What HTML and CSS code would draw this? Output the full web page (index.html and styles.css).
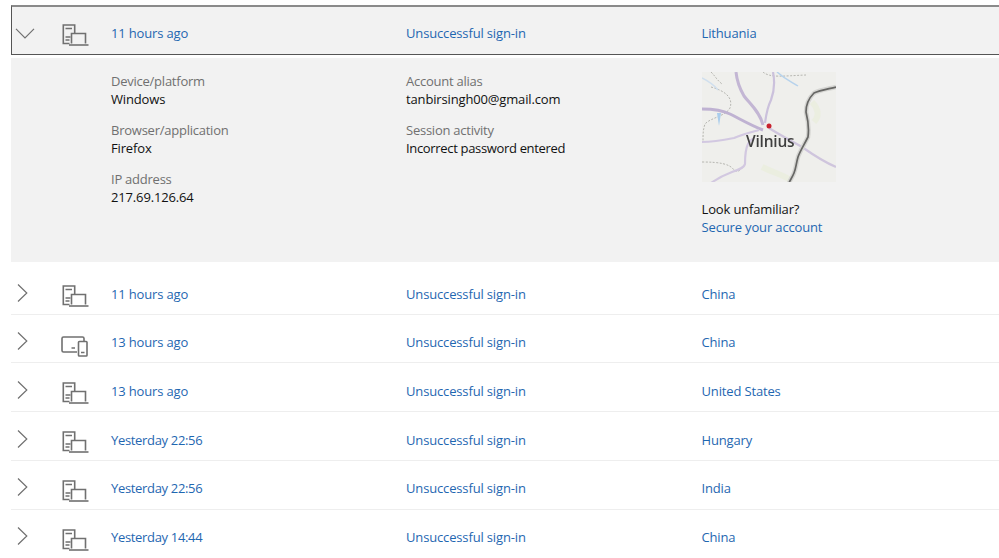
FILE: index.html
```html
<!DOCTYPE html>
<html lang="en">
<head>
<meta charset="utf-8">
<title>Recent activity</title>
<link rel="stylesheet" href="styles.css">
</head>
<body>
<svg class="defs" width="0" height="0" aria-hidden="true">
  <defs>
    <symbol id="pc" viewBox="0 0 27 23">
      <g fill="none" stroke="#707070" stroke-width="1.600">
        <path d="M7.500 19.500H1.300V1H12.700V9"/>
        <path d="M3.500 4.500h6.500M3.500 13h5M3.500 16h4"/>
        <path d="M9.500 19.500V9.500H23.500V19.500"/>
        <path d="M7 21h19.500"/>
      </g>
    </symbol>
    <symbol id="tablet" viewBox="0 0 27 21">
      <g fill="none" stroke="#707070" stroke-width="1.600">
        <path d="M16 16H2.500A1.500 1.500 0 0 1 1 14.500V2.500A1.500 1.500 0 0 1 2.500 1H21.500A1.500 1.500 0 0 1 23 2.500V5"/>
        <rect x="17.500" y="5.500" width="8.500" height="14.500" rx=".8"/>
        <path d="M10.500 12h3.500M20 16.500h3.500"/>
      </g>
    </symbol>
    <symbol id="right" viewBox="0 0 11 18">
      <path d="M1 .5 9.800 9 1 17.500" fill="none" stroke="#707070" stroke-width="1.200"/>
    </symbol>
  </defs>
</svg>
<main class="list">
  <section class="row row-open">
    <svg class="chev-down" viewBox="0 0 20 11" aria-hidden="true"><path d="M1 .8 10 10 19 .8" fill="none" stroke="#707070" stroke-width="1.200"/></svg>
    <svg class="ico ico-pc"><use href="#pc"/></svg>
    <a class="link">11 hours ago</a><a class="link">Unsuccessful sign-in</a><a class="link">Lithuania</a>
  </section>
  <section class="panel">
    <div class="panel-col">
      <dl class="field"><dt>Device/platform</dt><dd>Windows</dd></dl>
      <dl class="field"><dt>Browser/application</dt><dd>Firefox</dd></dl>
      <dl class="field"><dt>IP address</dt><dd>217.69.126.64</dd></dl>
    </div>
    <div class="panel-col">
      <dl class="field"><dt>Account alias</dt><dd>tanbirsingh00@gmail.com</dd></dl>
      <dl class="field"><dt>Session activity</dt><dd class="tight">Incorrect password entered</dd></dl>
    </div>
    <div class="panel-col">
      <svg class="map" viewBox="0 0 134 110" role="img" aria-label="Map of Vilnius">
        <rect width="134" height="110" fill="#efefec"/>
        <g fill="none">
          <path d="M110 30C116 36 118 44 112 50M60 95C70 100 84 104 88 108" stroke="#ebeee0" stroke-width="6"/>
          <path d="M9 0C14 5 14 7 20 12M9 15C20 18 32 24 28 36 24 44 8 46 3 52 1 58 1 62 1 70M0 90C18 90 28 92 32 98 36 102 40 96 42 94M61 0C68 6 80 4 104 3" stroke="#b6b6b1" stroke-width="1" stroke-dasharray="2 1.500"/>
          <path d="M75 0C84 8 90 10 96 14" stroke="#b6d2ec" stroke-width="1.500"/>
          <path d="M0 6C6 9 12 13 16 18" stroke="#d0dfee" stroke-width="1.500"/>
          <path d="M34 0C35 10 38 17 42 24 48 32 58 40 61 53" stroke="#c3b6d4" stroke-width="3"/>
          <path d="M0 37C10 37 20 38 28 42 38 47 50 54 61 58" stroke="#bfb2d2" stroke-width="3"/>
          <path d="M71 0C73 10 72 20 69 28 65 36 64 44 63 51" stroke="#cbc1dc" stroke-width="2.200"/>
          <path d="M0 70C10 70 22 68 32 66 42 62 50 60 57 58" stroke="#d2c8e1" stroke-width="2.200"/>
          <path d="M67 56C76 62 88 68 100 75 110 82 122 90 134 95" stroke="#cfc5dd" stroke-width="2.200"/>
          <path d="M9 111C16 106 22 103 30 100 36 98 42 96 43 92 43 84 43 78 46 72 48 68 50 67 52 66" stroke="#d2c8e0" stroke-width="2.200"/>
          <path d="M134 15C126 17 118 18 112 21 106 27 104 33 104 40 106 48 107 58 106 65 102 73 98 79 96 85 94 92 94 96 92 101 90 106 88 108 87 111" stroke="#d5d5d2" stroke-width="4.500"/>
          <path d="M134 15C126 17 118 18 112 21 106 27 104 33 104 40 106 48 107 58 106 65 102 73 98 79 96 85 94 92 94 96 92 101 90 106 88 108 87 111" stroke="#666664" stroke-width="1.700"/>
        </g>
        <path d="M15 41 17 54 19 41Z" fill="#a9cdec"/>
        <circle cx="67" cy="54" r="2.500" fill="#c8222e"/>
        <text class="map-label" x="44" y="75">Vilnius</text>
      </svg>
      <p class="unfamiliar">Look unfamiliar?</p>
      <a class="link secure">Secure your account</a>
    </div>
  </section>
  <section class="row row-first">
    <svg class="chev"><use href="#right"/></svg><svg class="ico ico-pc"><use href="#pc"/></svg>
    <a class="link">11 hours ago</a><a class="link">Unsuccessful sign-in</a><a class="link">China</a>
  </section>
  <section class="row">
    <svg class="chev"><use href="#right"/></svg><svg class="ico ico-tablet"><use href="#tablet"/></svg>
    <a class="link">13 hours ago</a><a class="link">Unsuccessful sign-in</a><a class="link">China</a>
  </section>
  <section class="row">
    <svg class="chev"><use href="#right"/></svg><svg class="ico ico-pc"><use href="#pc"/></svg>
    <a class="link">13 hours ago</a><a class="link">Unsuccessful sign-in</a><a class="link">United States</a>
  </section>
  <section class="row">
    <svg class="chev"><use href="#right"/></svg><svg class="ico ico-pc"><use href="#pc"/></svg>
    <a class="link tight">Yesterday 22:56</a><a class="link">Unsuccessful sign-in</a><a class="link">Hungary</a>
  </section>
  <section class="row">
    <svg class="chev"><use href="#right"/></svg><svg class="ico ico-pc"><use href="#pc"/></svg>
    <a class="link tight">Yesterday 22:56</a><a class="link">Unsuccessful sign-in</a><a class="link">India</a>
  </section>
  <section class="row">
    <svg class="chev"><use href="#right"/></svg><svg class="ico ico-pc"><use href="#pc"/></svg>
    <a class="link tight">Yesterday 14:44</a><a class="link">Unsuccessful sign-in</a><a class="link">China</a>
  </section>
</main>
</body>
</html>
```
FILE: styles.css
```css
html, body {
  margin: 0;
  height: 558px;
  overflow: hidden;
  background: #fff;
}
body {
  font-family: "Open Sans", "Noto Sans", sans-serif;
  font-size: 13px;
  letter-spacing: -0.15px;
  line-height: 18px;
  color: #1a1a1a;
}
.defs { display: block; }
.list {
  padding: 5px 0 0 11px;
}
.row {
  display: grid;
  grid-template-columns: 40px 60px 295px 295.5px 1fr;
  align-items: center;
  height: 48.8px;
  box-sizing: border-box;
  border-bottom: 1px solid #eeeeee;
  padding-top: 7px;
}
.row-open {
  grid-template-columns: 39px 60px 295px 295.5px 1fr;
  height: 50px;
  padding-top: 4px;
  background: #f2f2f2;
  border: 1px solid #555;
  border-top: 2px solid #8a8a8a;
  border-right: 0;
  margin-bottom: 3px;
}
.row-first {
  height: 52.7px;
  padding-top: 12px;
}
.link { color: #1f67b1; }
.tight { letter-spacing: -0.33px; }
.chev {
  width: 11px;
  height: 18px;
  margin-left: 6px;
  margin-top: -2px;
}
.chev-down {
  width: 20px;
  height: 11px;
  margin-left: 3px;
  margin-top: 2px;
}
.ico { display: block; margin-left: 11px; width: 27px; }
.ico-pc { height: 23px; margin-top: 6px; }
.ico-tablet { height: 21px; margin-top: 8px; margin-left: 10px; }
.panel {
  display: grid;
  grid-template-columns: 295px 295.5px 1fr;
  height: 204px;
  padding: 14px 0 0 100px;
  box-sizing: border-box;
  background: #f2f2f2;
}
.panel-col { min-width: 0; }
.field { margin: 0 0 13px; }
.field dt { color: #707070; letter-spacing: -0.24px; }
.field dd { margin: 0; color: #111; }
.map {
  display: block;
  width: 134px;
  height: 110px;
  filter: blur(0.35px);
}
.map-label {
  font-family: "Open Sans", sans-serif;
  font-size: 15.5px;
  font-weight: 600;
  letter-spacing: -0.2px;
  fill: #3f3f3f;
}
.unfamiliar {
  margin: 18px 0 0;
  color: #111;
}
.secure { display: block; }
```
